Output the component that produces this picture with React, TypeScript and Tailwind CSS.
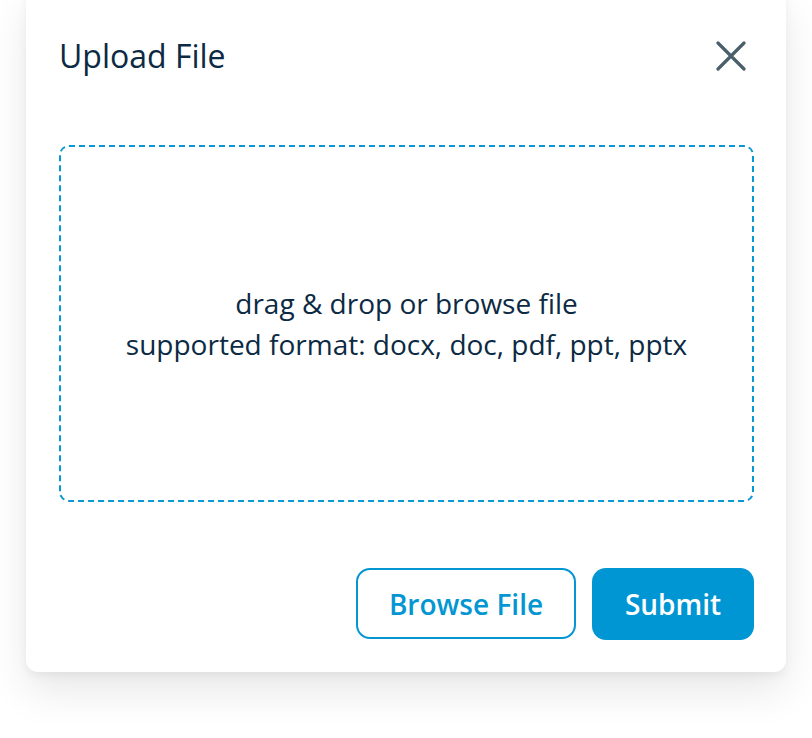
import React from 'react';

const App: React.FC = () => {
  return (
    <div className="min-h-screen bg-white overflow-hidden" style={{ fontFamily: '"Open Sans", sans-serif' }}>
      <div className="pl-[26px] pr-[26px]">
        {/* Dialog card */}
        <div className="-mt-3 w-[760px] rounded-[12px] bg-white pt-[46px] pb-[32px] pl-[33px] pr-[32px] shadow-[0_20px_40px_rgba(0,0,0,0.09),0_4px_10px_rgba(0,0,0,0.05)]">
          <div className="flex items-center justify-between">
            <h2 className="text-[32px] leading-[44px] text-[#0c2a43]">Upload File</h2>
            <button className="mr-[8px] text-[#4b5f6b]" aria-label="Close">
              <svg width="30" height="30" viewBox="0 0 30 30" fill="none" stroke="currentColor" strokeWidth="3.2" strokeLinecap="round">
                <path d="M2 2L28 28M28 2L2 28" />
              </svg>
            </button>
          </div>

          {/* Drop zone */}
          <div className="mt-[67px] h-[357px] rounded-[10px] border-2 border-dashed border-[#0a98d2] flex flex-col items-center justify-center text-center text-[28px] leading-[41px] text-[#0c2a43]">
            <p>drag &amp; drop or browse file</p>
            <p>supported format: docx, doc, pdf, ppt, pptx</p>
          </div>

          {/* Actions */}
          <div className="mt-[66px] flex justify-end gap-[16px]">
            <button className="h-[71px] w-[220px] rounded-[14px] border-2 border-[#0396d3] text-[28px] font-semibold text-[#0396d3]">
              Browse File
            </button>
            <button className="h-[72px] w-[162px] rounded-[14px] bg-[#0096d4] text-[28px] font-semibold text-white">
              Submit
            </button>
          </div>
        </div>
      </div>
    </div>
  );
};

export default App;
